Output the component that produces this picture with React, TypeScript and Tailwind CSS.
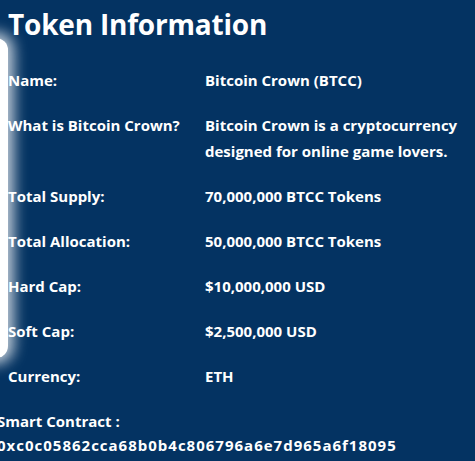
import React from 'react';

const rows: { label: string; value: string }[] = [
  { label: 'Name:', value: 'Bitcoin Crown (BTCC)' },
  { label: 'What is Bitcoin Crown?', value: 'Bitcoin Crown is a cryptocurrency designed for online game lovers.' },
  { label: 'Total Supply:', value: '70,000,000 BTCC Tokens' },
  { label: 'Total Allocation:', value: '50,000,000 BTCC Tokens' },
  { label: 'Hard Cap:', value: '$10,000,000 USD' },
  { label: 'Soft Cap:', value: '$2,500,000 USD' },
  { label: 'Currency:', value: 'ETH' },
];

export default function App() {
  return (
    <div
      className="relative w-[475px] h-[461px] overflow-hidden bg-[#043362] text-white"
      style={{ fontFamily: '"Open Sans", Lato, sans-serif' }}
    >
      {/* glowing white edge on the left */}
      <div className="absolute left-[-20px] top-[38px] w-[28px] h-[320px] rounded-[12px] bg-white shadow-[0_0_14px_6px_rgba(255,255,255,0.75)]" />

      <div className="relative pl-2">
        <h2 className="text-[28px] font-bold leading-[48px] pb-[9px] tracking-[-0.2px]">Token Information</h2>

        <table className="w-[467px] text-[15px] font-bold leading-[26px]">
          <tbody>
            {rows.map((r) => (
              <tr key={r.label}>
                <td className="w-[197px] align-top py-[9.5px]">{r.label}</td>
                <td className="align-top py-[9.5px]">{r.value}</td>
              </tr>
            ))}
          </tbody>
        </table>

        <div className="ml-[-11px] mt-[11px] text-[15px] font-bold leading-[24px]">
          <div>Smart Contract :</div>
          <div className="tracking-[1px]">0xc0c05862cca68b0b4c806796a6e7d965a6f18095</div>
        </div>
      </div>
    </div>
  );
}
